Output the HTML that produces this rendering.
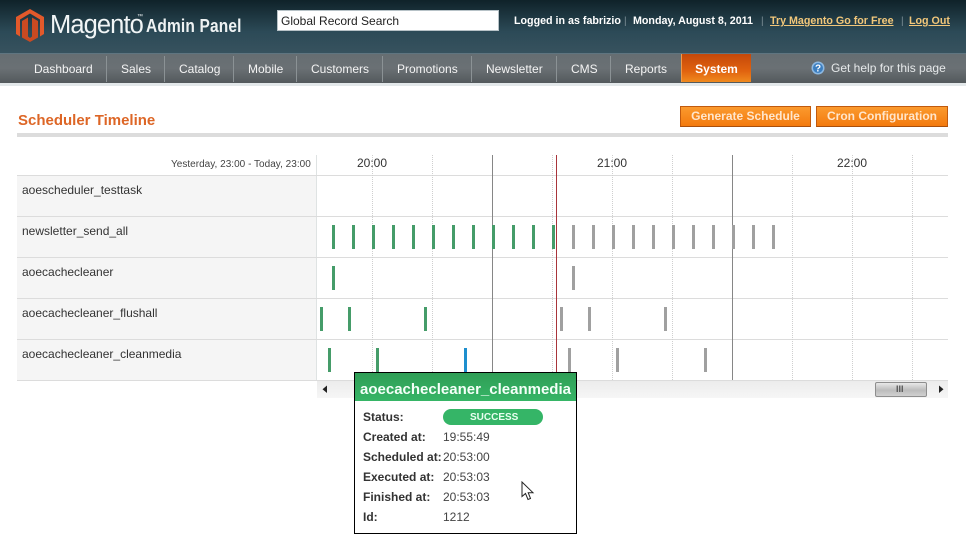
<!DOCTYPE html>
<html><head><meta charset="utf-8"><style>
html,body{margin:0;padding:0;background:#fff}
body{width:966px;height:548px;position:relative;overflow:hidden;font-family:"Liberation Sans",Arial,sans-serif;font-size:12px;color:#333}
div,span,a{position:absolute;white-space:nowrap}
#top{left:0;top:0;width:966px;height:53px;background:linear-gradient(#0f2229,#2c4a57 60%,#37525e)}
#nav{left:0;top:53px;width:966px;height:30px;border-top:1px solid #5f7580;box-sizing:border-box;background:linear-gradient(#666e72,#6a7074 50%,#53595c)}
#under{left:0;top:83px;width:966px;height:3px;background:#e3e8ea}
.n{top:62px;color:#f4f4f4;font-size:12px;line-height:14px}
.s{top:56px;width:1px;height:26px;background:#8b9295}
.t{top:15px;color:#fff;font-weight:bold;font-size:10.7px;line-height:13px}
.l{color:#f2c77a;text-decoration:underline}
.p{top:15px;color:#7d8f97;font-size:10px;line-height:13px}
.btn{top:106px;height:21px;box-sizing:border-box;border:1px solid #c15a0e;border-bottom-color:#a94f0c;background:linear-gradient(#fb9a2e,#f37a0e);color:#ffe6cc;font-weight:bold;font-size:12px;line-height:18px;text-align:center}
.h{left:17px;width:931px;height:1px;background:#dcdcdc}
.lab{left:17px;width:299px;height:40px;background:#f5f5f5}
.nm{left:22px;font-size:12px;color:#333;line-height:14px}
.dot{top:155px;height:225px;width:0;border-left:1px dotted #cfcfcf}
.sol{top:155px;height:225px;width:1px;background:#868686}
.hr{top:156px;font-size:12px;color:#333;line-height:14px}
.b{width:3px;height:24px}
.g{background:#459c69}.x{background:#a0a0a0}.u{background:#1e8fce}
#tip{left:354px;top:372px;width:223px;height:162px;box-sizing:border-box;border:1px solid #000;background:#fff}
#tiph{left:0;top:0;width:221px;height:28px;background:linear-gradient(#2f9e56,#36b566);color:#f4fff8;font-weight:bold;font-size:15px;line-height:33px;text-align:center}
.k{left:8px;font-size:12px;font-weight:bold;color:#333;line-height:14px}
.v{left:88px;font-size:12px;color:#444;line-height:14px}
</style></head><body>
<div id="top"></div>
<svg style="position:absolute;left:16px;top:9px" width="28" height="33" viewBox="0 0 28 33">
<path d="M14 0L28 8V25L24 27.500V10.500L14 4.500L4 10.500V27.500L0 25V8Z" fill="#e2592b"/>
<path d="M6 12L12 8.500V27.500L14 29L16 27.500V8.500L22 12V28.500L14 33L6 28.500Z" fill="#c94a22"/>
</svg>
<span style="left:50px;top:10px;color:#f1f5f6;font-size:25.500px;line-height:30px;letter-spacing:-.9px">Magento</span>
<span style="left:137px;top:14px;color:#f1f5f6;font-size:6px;line-height:7px">™</span>
<span style="left:146px;top:16px;color:#eef2f3;font-size:18px;line-height:21px;font-weight:bold;transform:scaleX(.86);transform-origin:0 0;letter-spacing:.2px">Admin Panel</span>
<div style="left:277px;top:10px;width:222px;height:21px;background:#fff;box-sizing:border-box;border:1px solid #b7c2c7;color:#222;font-size:12px;line-height:20px;padding-left:3px">Global Record Search</div>
<span class="t" style="left:514px">Logged in as fabrizio</span>
<span class="p" style="left:624px">|</span>
<span class="t" style="left:633px">Monday, August 8, 2011</span>
<span class="p" style="left:761px">|</span>
<a class="t l" style="left:770px">Try Magento Go for Free</a>
<span class="p" style="left:901px">|</span>
<a class="t l" style="left:909px">Log Out</a>
<div id="nav"></div><div id="under"></div>
<span class="n" style="left:34px">Dashboard</span><div class="s" style="left:106px"></div>
<span class="n" style="left:121px">Sales</span><div class="s" style="left:164px"></div>
<span class="n" style="left:179px">Catalog</span><div class="s" style="left:233px"></div>
<span class="n" style="left:248px">Mobile</span><div class="s" style="left:296px"></div>
<span class="n" style="left:311px">Customers</span><div class="s" style="left:382px"></div>
<span class="n" style="left:397px">Promotions</span><div class="s" style="left:471px"></div>
<span class="n" style="left:486px">Newsletter</span><div class="s" style="left:556px"></div>
<span class="n" style="left:571px">CMS</span><div class="s" style="left:610px"></div>
<span class="n" style="left:625px">Reports</span>
<div style="left:681px;top:54px;width:70px;height:28px;background:linear-gradient(#c4480a,#e0620f 60%,#f08a1e);border-left:1px solid #f09a4a;box-sizing:border-box;color:#fff;font-weight:bold;font-size:12px;line-height:30px;text-align:center">System</div>
<svg style="position:absolute;left:811px;top:61px" width="14" height="14" viewBox="0 0 14 14"><circle cx="7" cy="7" r="6.500" fill="#8db9e2"/><circle cx="7" cy="7" r="5" fill="#3d7fc0"/><text x="7" y="10.500" text-anchor="middle" font-size="10" font-weight="bold" fill="#fff" font-family="Liberation Sans">?</text></svg>
<span style="left:831px;top:61px;color:#e6e9ea;font-size:12px;line-height:14px">Get help for this page</span>

<span style="left:18px;top:112px;color:#dd6626;font-size:15px;line-height:17px;font-weight:bold">Scheduler Timeline</span>
<div class="btn" style="left:680px;width:131px">Generate Schedule</div>
<div class="btn" style="left:816px;width:132px">Cron Configuration</div>
<div style="left:17px;top:133px;width:931px;height:4px;background:#dcdcdc"></div>

<span style="left:171px;top:158px;font-size:10px;line-height:13px;color:#444;letter-spacing:.02px">Yesterday, 23:00 - Today, 23:00</span>
<div class="lab" style="top:176px"></div><div class="lab" style="top:217px"></div><div class="lab" style="top:258px"></div><div class="lab" style="top:299px"></div><div class="lab" style="top:340px"></div>
<div style="left:316px;top:155px;width:1px;height:226px;background:#dfe3e3"></div>
<div class="h" style="top:175px"></div><div class="h" style="top:216px"></div><div class="h" style="top:257px"></div><div class="h" style="top:298px"></div><div class="h" style="top:339px"></div><div class="h" style="top:380px"></div>
<span class="nm" style="top:183px">aoescheduler_testtask</span>
<span class="nm" style="top:224px">newsletter_send_all</span>
<span class="nm" style="top:265px">aoecachecleaner</span>
<span class="nm" style="top:306px">aoecachecleaner_flushall</span>
<span class="nm" style="top:347px">aoecachecleaner_cleanmedia</span>

<div class="dot" style="left:372px"></div><div class="dot" style="left:432px"></div><div class="dot" style="left:552px"></div><div class="dot" style="left:612px"></div><div class="dot" style="left:672px"></div><div class="dot" style="left:792px"></div><div class="dot" style="left:852px"></div><div class="dot" style="left:912px"></div>
<div class="sol" style="left:492px"></div><div class="sol" style="left:732px"></div>
<span class="hr" style="left:357px">20:00</span><span class="hr" style="left:597px">21:00</span><span class="hr" style="left:837px">22:00</span>

<div class="b g" style="left:332px;top:225px"></div><div class="b g" style="left:352px;top:225px"></div><div class="b g" style="left:372px;top:225px"></div><div class="b g" style="left:392px;top:225px"></div><div class="b g" style="left:412px;top:225px"></div><div class="b g" style="left:432px;top:225px"></div><div class="b g" style="left:452px;top:225px"></div><div class="b g" style="left:472px;top:225px"></div><div class="b g" style="left:492px;top:225px"></div><div class="b g" style="left:512px;top:225px"></div><div class="b g" style="left:532px;top:225px"></div><div class="b g" style="left:552px;top:225px"></div>
<div class="b x" style="left:572px;top:225px"></div><div class="b x" style="left:592px;top:225px"></div><div class="b x" style="left:612px;top:225px"></div><div class="b x" style="left:632px;top:225px"></div><div class="b x" style="left:652px;top:225px"></div><div class="b x" style="left:672px;top:225px"></div><div class="b x" style="left:692px;top:225px"></div><div class="b x" style="left:712px;top:225px"></div><div class="b x" style="left:732px;top:225px"></div><div class="b x" style="left:752px;top:225px"></div><div class="b x" style="left:772px;top:225px"></div>
<div class="b g" style="left:332px;top:266px"></div><div class="b x" style="left:572px;top:266px"></div>
<div class="b g" style="left:320px;top:307px"></div><div class="b g" style="left:348px;top:307px"></div><div class="b g" style="left:424px;top:307px"></div><div class="b x" style="left:560px;top:307px"></div><div class="b x" style="left:588px;top:307px"></div><div class="b x" style="left:664px;top:307px"></div>
<div class="b g" style="left:328px;top:348px"></div><div class="b g" style="left:376px;top:348px"></div><div class="b u" style="left:464px;top:348px"></div><div class="b x" style="left:568px;top:348px"></div><div class="b x" style="left:616px;top:348px"></div><div class="b x" style="left:704px;top:348px"></div>
<div style="left:556px;top:155px;width:1px;height:225px;background:#a8343a"></div>

<div style="left:317px;top:381px;width:631px;height:17px;background:linear-gradient(#ececec,#f6f6f6)"></div>
<svg style="position:absolute;left:322px;top:385px" width="6" height="9" viewBox="0 0 6 9"><path d="M5 0.500V8L0.500 4.200Z" fill="#222"/></svg>
<svg style="position:absolute;left:938px;top:385px" width="6" height="9" viewBox="0 0 6 9"><path d="M1 0.500V8L5.500 4.200Z" fill="#222"/></svg>
<div style="left:875px;top:382px;width:52px;height:15px;box-sizing:border-box;border:1px solid #8e8e8e;border-radius:2px;background:linear-gradient(#e8e8e8,#bcbcbc 55%,#d0d0d0)"></div>
<span style="left:896px;top:384px;font-size:9px;line-height:11px;color:#555;font-weight:bold">III</span>

<div id="tip">
<div id="tiph">aoecachecleaner_cleanmedia</div>
<span class="k" style="top:37px">Status:</span>
<div style="left:88px;top:36px;width:100px;height:16px;border-radius:8px;background:#35b567"></div>
<span style="left:115px;top:38px;color:#e9fff0;font-weight:bold;font-size:10px;line-height:13px">SUCCESS</span>
<span class="k" style="top:57px">Created at:</span><span class="v" style="top:57px">19:55:49</span>
<span class="k" style="top:77px">Scheduled at:</span><span class="v" style="top:77px">20:53:00</span>
<span class="k" style="top:97px">Executed at:</span><span class="v" style="top:97px">20:53:03</span>
<span class="k" style="top:117px">Finished at:</span><span class="v" style="top:117px">20:53:03</span>
<span class="k" style="top:137px">Id:</span><span class="v" style="top:137px">1212</span>
</div>
<svg style="position:absolute;left:521px;top:481px" width="14" height="20" viewBox="0 0 14 20"><path d="M1 1V15.500L4.500 12.500L7 18.500L9.500 17.500L7.200 11.700H12Z" fill="#fff" stroke="#222" stroke-width="1"/></svg>
</body></html>
